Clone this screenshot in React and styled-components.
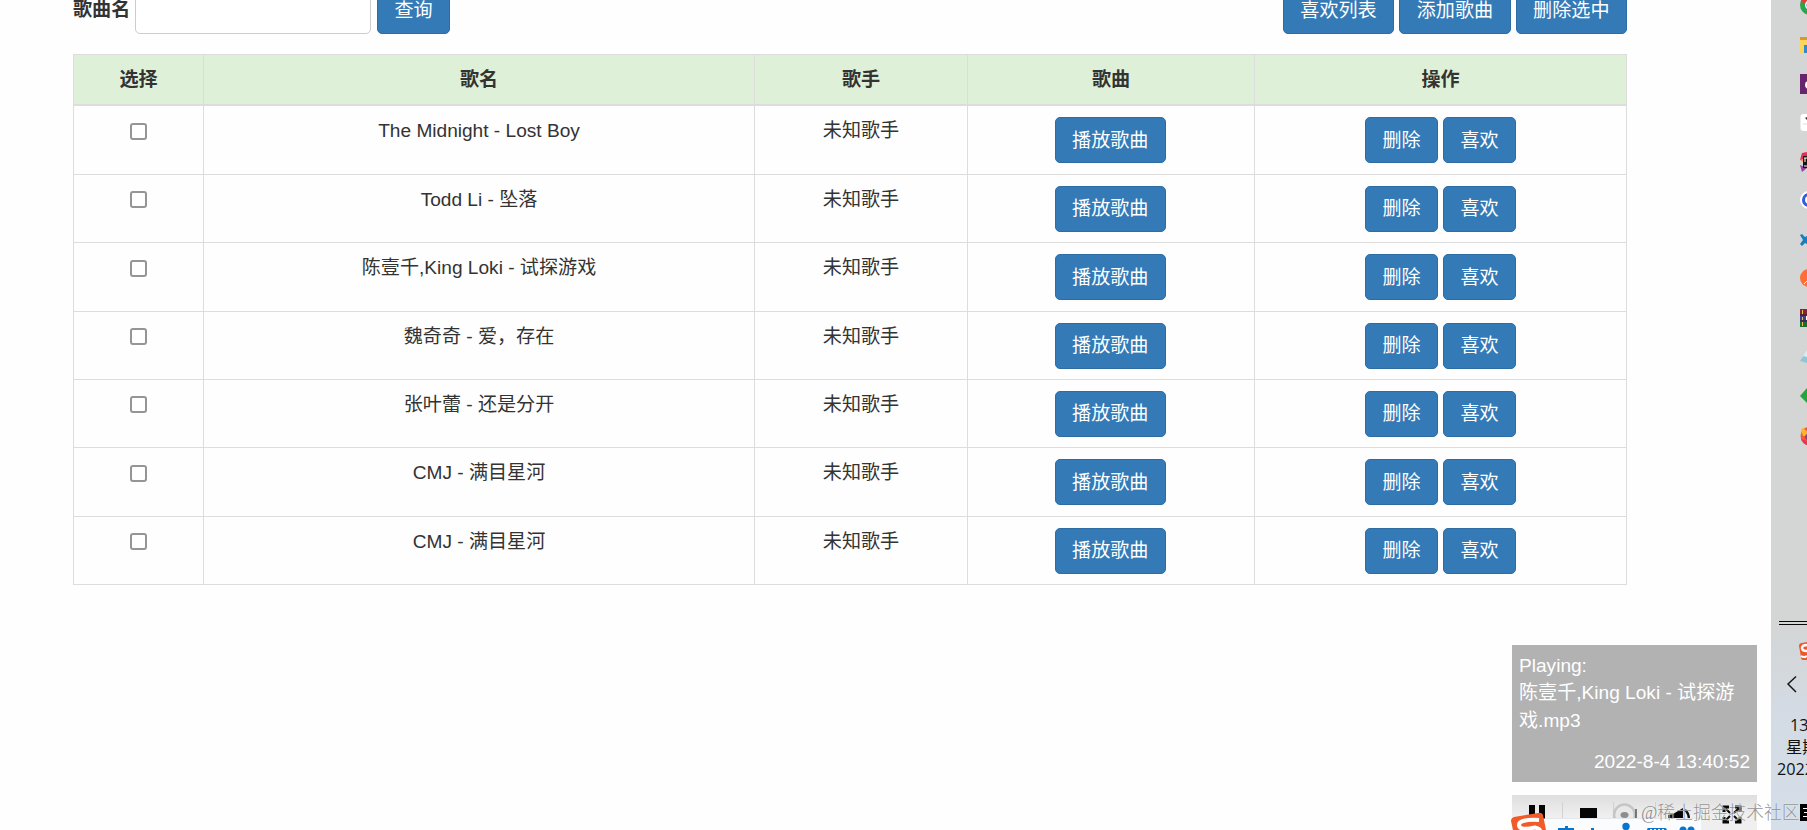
import React from "react";
import styled, { createGlobalStyle } from "styled-components";

const songs = [
  "The Midnight - Lost Boy",
  "Todd Li - 坠落",
  "陈壹千,King Loki - 试探游戏",
  "魏奇奇 - 爱，存在",
  "张叶蕾 - 还是分开",
  "CMJ - 满目星河",
  "CMJ - 满目星河",
];

const GlobalStyle = createGlobalStyle`
  * {
    box-sizing: border-box;
  }
  body {
    margin: 0;
    overflow: hidden;
    background: #fefefe;
    color: #333;
    font-family: "Liberation Sans", "Noto Sans CJK SC", sans-serif;
    font-size: 19.1px;
    line-height: 27.3px;
  }
`;

const Desktop = styled.div`
  display: flex;
  position: relative;
  width: 1807px;
  height: 830px;
  overflow: hidden;
`;

const Main = styled.main`
  display: flex;
  flex-direction: column;
  width: 1771px;
  padding-left: 73px;
`;

const Toolbar = styled.div`
  display: flex;
  align-items: flex-end;
  width: 1554px;
  height: 34px;
  margin-bottom: 20px;
`;

const Label = styled.label`
  width: 57px;
  height: 38px;
  margin-right: 5px;
  font-weight: bold;
  white-space: nowrap;
`;

const SearchInput = styled.input`
  width: 236px;
  height: 46px;
  margin-right: 6px;
  background: #fff;
  border: 1px solid #ccc;
  border-radius: 5px;
`;

const Button = styled.button`
  flex: none;
  width: ${(props) => (props.$wide ? "111.4px" : "73px")};
  height: 46px;
  padding: 0;
  background: #337ab7;
  border: 1px solid #2e6da4;
  border-radius: 5px;
  color: #fff;
  font: inherit;
  vertical-align: top;
`;

const ButtonGroup = styled.div`
  display: flex;
  justify-content: ${(props) => (props.$end ? "flex-end" : "center")};
  gap: 5px;
  margin-left: ${(props) => (props.$end ? "auto" : "0")};
`;

const Table = styled.div`
  width: 1554px;
  border: 1px solid #ddd;
  border-bottom: 0;
`;

const Row = styled.div`
  display: grid;
  grid-template-columns: 129px 551px 213px 287px 1fr;
  height: 68.4px;
  border-bottom: 1px solid #ddd;
`;

const HeadRow = styled(Row)`
  height: 51.4px;
  background: #dff0d8;
  border-bottom-width: 2px;
  font-weight: bold;
`;

const Cell = styled.div`
  padding-top: 11px;
  text-align: center;
  & + & {
    border-left: 1px solid #ddd;
  }
`;

const PlayCell = styled(Cell)`
  padding-right: 1.5px;
`;

const Checkbox = styled.input`
  appearance: none;
  display: block;
  width: 17px;
  height: 17px;
  margin: 5.4px auto 0;
  background: #fff;
  border: 2px solid #959595;
  border-radius: 3px;
`;

const Player = styled.section`
  display: flex;
  flex-direction: column;
  width: 245px;
  margin: 60px 0 0 1439px;
`;

const NowPlaying = styled.div`
  display: flex;
  flex-direction: column;
  height: 137px;
  padding: 7px;
  background: #b2b2b2;
  color: #fff;
`;

const PlayedAt = styled.span`
  margin-top: auto;
  text-align: right;
`;

const Controls = styled.div`
  height: 35px;
  margin-top: 13px;
  background: linear-gradient(#dedede, #efefef 60%);
  svg {
    display: block;
  }
`;

const Taskbar = styled.aside`
  display: flex;
  flex-direction: column;
  width: 36px;
  overflow: hidden;
  background: linear-gradient(#d4d5d5 0, #d4d5d5 620px, #d3dbe4 720px, #d5dfe9 100%);
  color: #111;
`;

const Apps = styled.div`
  height: 621px;
`;

const Tray = styled.div`
  height: 94px;
  svg {
    display: block;
  }
`;

const Clock = styled.div`
  display: flex;
  flex-direction: column;
  font-family: "Open Sans", "Noto Sans CJK SC", sans-serif;
  font-size: 16.2px;
  line-height: 21.8px;
`;

const ClockLine = styled.span`
  padding-left: ${(props) => props.$indent}px;
  white-space: nowrap;
`;

const InputBar = styled.div`
  position: absolute;
  left: 1507px;
  top: 808px;
  width: 196px;
  height: 22px;
  svg {
    display: block;
  }
`;

const Watermark = styled.div`
  position: absolute;
  left: 1641px;
  top: 800px;
  color: rgba(125, 125, 125, 0.85);
  font-family: "Liberation Serif", "Noto Sans CJK SC", serif;
  font-size: 17.8px;
  font-weight: 300;
  line-height: 26px;
  text-shadow: 0 0 1px #fff;
  white-space: nowrap;
`;

const CornerMark = styled.div`
  position: absolute;
  left: 1800px;
  top: 804px;
  width: 7px;
  height: 17px;
  background: #000;
  svg {
    display: block;
  }
`;

function AppIcons() {
  return (
    <svg width="36" height="460" viewBox="0 0 36 460">
      {/* chrome */}
      <circle cx="39" cy="5" r="10" fill="#2ea24c" />
      <path d="M30 1 Q32 -4 36 -5 V4 H33Z" fill="#dd4235" />
      <circle cx="39" cy="5" r="5" fill="#fff" />
      <circle cx="39" cy="5" r="3.5" fill="#3c78e0" />
      {/* explorer */}
      <path d="M29 37h7v16h-7z" fill="#fbd55f" />
      <path d="M29 37h7v3h-7z" fill="#d99b1d" />
      <path d="M33 45h3v8h-3z" fill="#2c8bd0" />
      {/* ide */}
      <path d="M29 74h7v20h-7z" fill="#68246c" />
      <circle cx="38" cy="85" r="4" fill="#fff" />
      {/* notes */}
      <rect x="29.500" y="114" width="15" height="17" rx="3" fill="#fff" />
      <path d="M34 118l2-1v3z" fill="#333" />
      <path d="M32 124h4" stroke="#ddd" />
      {/* jetbrains */}
      <path d="M31 153l5-1v8h-7z" fill="#e62b58" />
      <path d="M29 160l7-3v7z" fill="#f58a49" />
      <path d="M29 165l7 3-5 4z" fill="#9742a2" />
      <path d="M32 156h4v12h-4z" fill="#151515" />
      <path d="M34 158v4m-1-4h3m-3 8h3" stroke="#fff" />
      {/* browser */}
      <circle cx="38" cy="200" r="9" fill="#fff" />
      <circle cx="38" cy="200" r="5.500" fill="none" stroke="#315be0" strokeWidth="3" />
      {/* vscode */}
      <path d="M29 235l2-1 3 3 2-1v8l-2-1-3 3-2-2 3-4z" fill="#157fc2" />
      {/* postman */}
      <circle cx="38" cy="278" r="9" fill="#ff6c37" />
      <path d="M33 284l3-3" stroke="#fff" />
      {/* winrar */}
      <path d="M29 309h7v6h-7z" fill="#872039" />
      <path d="M29 315h7v6h-7z" fill="#3c3c91" />
      <path d="M29 321h7v6h-7z" fill="#196d2f" />
      <path d="M29 315h7m-7 6h7" stroke="#222" />
      <path d="M31.500 310v4m0 3v3m0 2v4" stroke="#efbd4d" />
      <path d="M35 316h1v4h-1z" fill="#fff" />
      {/* drive */}
      <path d="M29 361l7-10v12z" fill="#8fc6d5" />
      <path d="M32 356l4-6v7z" fill="#d9edf2" />
      {/* diamond */}
      <path d="M29 396l7-8v15z" fill="#24a63d" />
      {/* firefox */}
      <circle cx="39" cy="436" r="9.500" fill="#f35b32" />
      <path d="M30 430q2-4 4 0l2 1v5h-4z" fill="#fdb52b" />
      <path d="M30 439q2 5 6 6v-4z" fill="#e83455" />
      <circle cx="37" cy="437" r="3" fill="#8340a0" />
    </svg>
  );
}

function TrayIcons() {
  return (
    <svg width="36" height="80" viewBox="0 0 36 80">
      <path d="M8 .500h28M8 3.500h28" stroke="#080808" />
      <path d="M28 25q0-3 3-3l5-1v18h-4q-2 0-2-3z" fill="#ef5726" />
      <path d="M36 24q-5 0-5 3t5 3" fill="none" stroke="#fff" strokeWidth="2.500" />
      <path d="M30 35q3 2 6 0" fill="none" stroke="#fff" strokeWidth="2" />
      <path d="M25 55.500l-8 7.500 8 8" fill="none" stroke="#111" strokeWidth="1.400" />
    </svg>
  );
}

function ControlIcons() {
  return (
    <svg width="245" height="35" viewBox="0 0 245 35">
      <path d="M50.500 7v28M101.500 7v28M143.500 7v20" stroke="#d1d1d1" />
      <path d="M17 10h6v25h-6zm10 0h6v25h-6zM68 13h17v17H68z" fill="#050505" />
      <circle cx="112.500" cy="20" r="10.500" fill="#e8e8e8" stroke="#c6c6c6" strokeWidth="2.500" />
      <ellipse cx="112.500" cy="20" rx="4" ry="3" fill="#8d8d8d" />
      <path d="M124 14v10" stroke="#555" strokeWidth="1.500" />
      <path d="M156 20l5-1 10-6v15h-15z" fill="#050505" />
      <path d="M173 15q4 3 4 10" fill="none" stroke="#111" strokeWidth="2.500" />
      <g fill="none" stroke="#080808" strokeWidth="3">
        <path d="M212 17v-5h5M223 12h5v5M212 22v5h5M223 27h5v-5" />
        <path d="M212 12l6 6m4 0l6-6M212 27l6-6m4 0l6 6" strokeWidth="2" />
      </g>
    </svg>
  );
}

function InputBarIcons() {
  return (
    <svg width="196" height="22" viewBox="0 0 196 22">
      <path d="M7 10.500h187V22H7z" fill="#fbfcfd" />
      <path d="M38 10.500h156" stroke="#e4e8ec" />
      <path d="M4 13q0-3 3-4L31 5q4-1 5 2l3 15H6z" fill="#f15a29" />
      <path d="M32 12Q12 11 12 17t16 2.500q6 1 5 5" fill="none" stroke="#fff" strokeWidth="4" />
      <g fill="#0876cf">
        <path d="M51 20h16v3H51zM58 18h3v5h-3zM84 20h3v3h-3z" />
        <circle cx="119" cy="18.500" r="3.700" />
        <path d="M141 20h17q2 0 2 3h-20q0-3 1-3z" />
        <circle cx="176" cy="22" r="3.500" />
        <circle cx="184" cy="22" r="3.500" />
      </g>
      <path d="M143 21.500h15" stroke="#fff" strokeDasharray="2 2" />
    </svg>
  );
}

function SongRow({ name }) {
  return (
    <Row>
      <Cell>
        <Checkbox type="checkbox" />
      </Cell>
      <Cell>{name}</Cell>
      <Cell>未知歌手</Cell>
      <PlayCell>
        <Button $wide>播放歌曲</Button>
      </PlayCell>
      <Cell>
        <ButtonGroup>
          <Button>删除</Button>
          <Button>喜欢</Button>
        </ButtonGroup>
      </Cell>
    </Row>
  );
}

export default function App() {
  return (
    <Desktop>
      <GlobalStyle />
      <Main>
        <Toolbar>
          <Label htmlFor="song">歌曲名</Label>
          <SearchInput id="song" />
          <Button>查询</Button>
          <ButtonGroup $end>
            <Button $wide>喜欢列表</Button>
            <Button $wide>添加歌曲</Button>
            <Button $wide>删除选中</Button>
          </ButtonGroup>
        </Toolbar>
        <Table>
          <HeadRow>
            <Cell>选择</Cell>
            <Cell>歌名</Cell>
            <Cell>歌手</Cell>
            <Cell>歌曲</Cell>
            <Cell>操作</Cell>
          </HeadRow>
          {songs.map((name, index) => (
            <SongRow key={index} name={name} />
          ))}
        </Table>
        <Player>
          <NowPlaying>
            <span>Playing:</span>
            <span>陈壹千,King Loki - 试探游戏.mp3</span>
            <PlayedAt>2022-8-4 13:40:52</PlayedAt>
          </NowPlaying>
          <Controls>
            <ControlIcons />
          </Controls>
        </Player>
      </Main>
      <Taskbar>
        <Apps>
          <AppIcons />
        </Apps>
        <Tray>
          <TrayIcons />
        </Tray>
        <Clock>
          <ClockLine $indent={19}>13</ClockLine>
          <ClockLine $indent={15}>星期</ClockLine>
          <ClockLine $indent={6}>2022</ClockLine>
        </Clock>
      </Taskbar>
      <InputBar>
        <InputBarIcons />
      </InputBar>
      <Watermark>@稀土掘金技术社区</Watermark>
      <CornerMark>
        <svg width="7" height="17" viewBox="0 0 7 17">
          <path d="M3 4.500h4M4 8.500h3M3 12.500h4" stroke="#fff" />
        </svg>
      </CornerMark>
    </Desktop>
  );
}
